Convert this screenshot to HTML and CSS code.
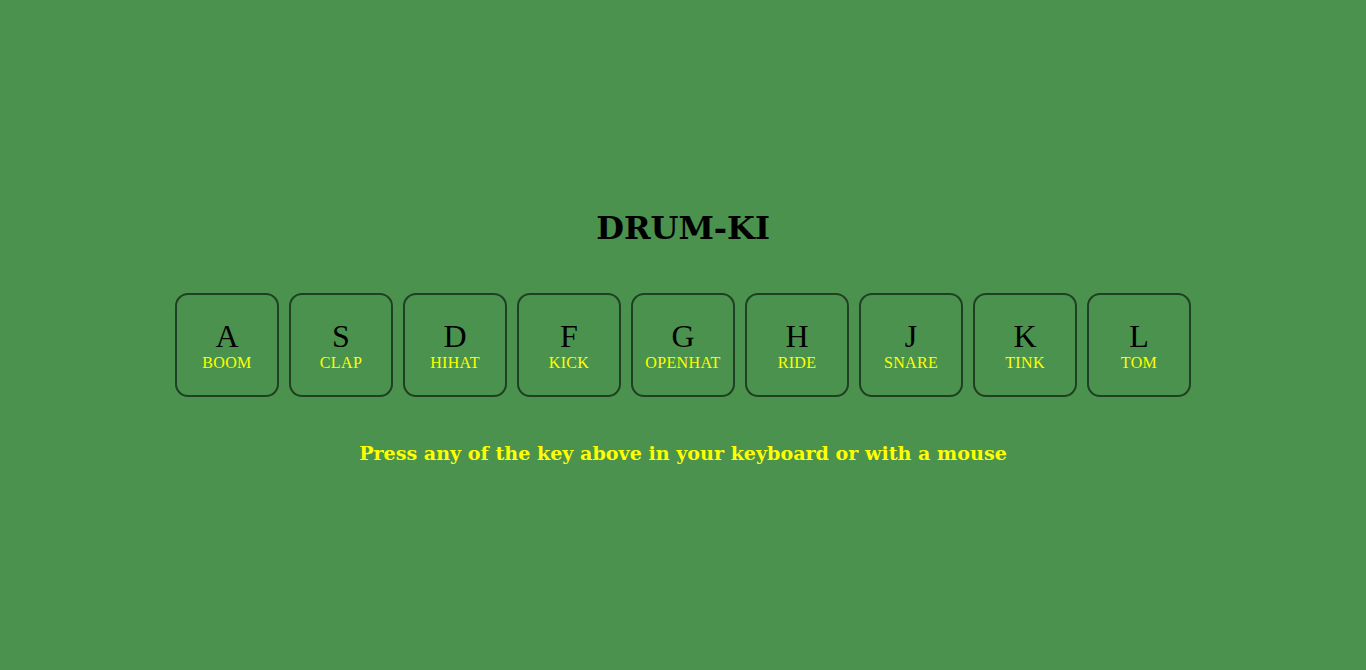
FILE: index.html
```html
<!DOCTYPE html>
<html lang="en">
<head>
<meta charset="utf-8">
<title>DRUM-KI</title>
<link rel="stylesheet" href="styles.css">
</head>
<body>
<main class="page">
  <h1 class="title">DRUM-KI</h1>
  <div class="keys">
    <div class="key"><kbd class="letter">A</kbd><span class="sound">boom</span></div>
    <div class="key"><kbd class="letter">S</kbd><span class="sound">clap</span></div>
    <div class="key"><kbd class="letter">D</kbd><span class="sound">hihat</span></div>
    <div class="key"><kbd class="letter">F</kbd><span class="sound">kick</span></div>
    <div class="key"><kbd class="letter">G</kbd><span class="sound">openhat</span></div>
    <div class="key"><kbd class="letter">H</kbd><span class="sound">ride</span></div>
    <div class="key"><kbd class="letter">J</kbd><span class="sound">snare</span></div>
    <div class="key"><kbd class="letter">K</kbd><span class="sound">tink</span></div>
    <div class="key"><kbd class="letter">L</kbd><span class="sound">tom</span></div>
  </div>
  <h3 class="hint">Press any of the key above in your keyboard or with a mouse</h3>
</main>
</body>
</html>
```
FILE: styles.css
```css
html, body {
  margin: 0;
  padding: 0;
}
body {
  background: #4b924e;
  font-family: "DejaVu Serif", serif;
  min-height: 100vh;
}
.page {
  display: flex;
  flex-direction: column;
  align-items: center;
  padding-top: 210px;
}
.title {
  margin: 0;
  font-size: 32px;
  font-weight: bold;
  color: #000;
  line-height: 37px;
}
.keys {
  display: flex;
  gap: 10px;
  margin-top: 46px;
}
.key {
  width: 100px;
  height: 100px;
  border: 2px solid #213f22;
  border-radius: 13px;
  display: flex;
  flex-direction: column;
  align-items: center;
  justify-content: center;
  font-family: "Liberation Serif", "Times New Roman", serif;
}
.letter {
  font-family: "Liberation Serif", "Times New Roman", serif;
  font-size: 32px;
  line-height: 35px;
  color: #000;
}
.sound {
  font-size: 16px;
  line-height: 18px;
  text-transform: uppercase;
  letter-spacing: 0.35px;
  color: #ffff00;
}
.hint {
  margin: 46px 0 0;
  font-size: 19.1px;
  font-weight: bold;
  line-height: 22px;
  color: #ffff00;
}
```
